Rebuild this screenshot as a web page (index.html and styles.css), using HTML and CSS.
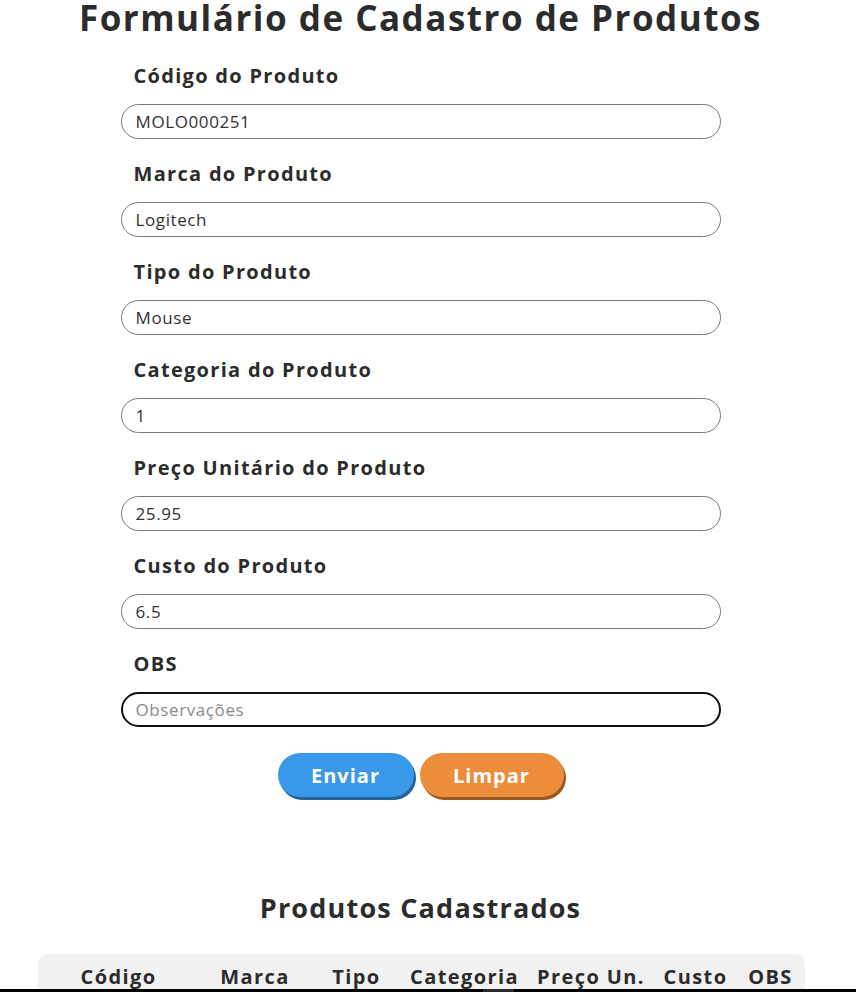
FILE: index.html
```html
<!DOCTYPE html>
<html lang="pt-BR">
<head>
<meta charset="utf-8">
<title>Cadastro de Produtos</title>
<link rel="stylesheet" href="styles.css">
</head>
<body>
<div class="page">
  <h1 class="title">Formulário de Cadastro de Produtos</h1>
  <form class="form">
    <div class="group">
      <label class="label" for="codigo">Código do Produto</label>
      <input class="field" id="codigo" type="text" value="MOLO000251">
    </div>
    <div class="group">
      <label class="label" for="marca">Marca do Produto</label>
      <input class="field" id="marca" type="text" value="Logitech">
    </div>
    <div class="group">
      <label class="label" for="tipo">Tipo do Produto</label>
      <input class="field" id="tipo" type="text" value="Mouse">
    </div>
    <div class="group">
      <label class="label" for="categoria">Categoria do Produto</label>
      <input class="field" id="categoria" type="text" value="1">
    </div>
    <div class="group">
      <label class="label" for="preco">Preço Unitário do Produto</label>
      <input class="field" id="preco" type="text" value="25.95">
    </div>
    <div class="group">
      <label class="label" for="custo">Custo do Produto</label>
      <input class="field" id="custo" type="text" value="6.5">
    </div>
    <div class="group">
      <label class="label" for="obs">OBS</label>
      <input class="field field-focus" id="obs" type="text" placeholder="Observações">
    </div>
    <div class="actions">
      <button type="button" class="btn btn-send">Enviar</button>
      <button type="button" class="btn btn-clear">Limpar</button>
    </div>
  </form>
  <h2 class="subtitle">Produtos Cadastrados</h2>
  <div class="table-wrap">
    <table class="table">
      <thead>
        <tr>
          <th class="c-cod">Código</th>
          <th class="c-marca">Marca</th>
          <th class="c-tipo">Tipo</th>
          <th class="c-cat">Categoria</th>
          <th class="c-preco">Preço Un.</th>
          <th class="c-custo">Custo</th>
          <th class="c-obs">OBS</th>
        </tr>
      </thead>
    </table>
  </div>
</div>
<div class="bottom-bar"><span class="bottom-thumb"></span></div>
</body>
</html>
```
FILE: styles.css
```css
html, body {
  margin: 0;
  padding: 0;
  background: #ffffff;
}
body {
  font-family: "Open Sans", "DejaVu Sans", sans-serif;
  color: #2f2f2f;
  overflow: hidden;
  height: 992px;
  position: relative;
}
.page {
  width: 841px;
}
.title {
  margin: 0;
  text-align: center;
  font-size: 35px;
  line-height: 36px;
  font-weight: 700;
  letter-spacing: 1.5px;
  color: #2c2c2c;
}
.form {
  width: 600px;
  margin: 28px auto 0;
  display: flex;
  flex-direction: column;
}
.group {
  display: flex;
  flex-direction: column;
  margin-bottom: 23px;
}
.label {
  font-size: 20px;
  line-height: 24px;
  font-weight: 700;
  letter-spacing: 1.3px;
  padding-left: 13px;
  margin-bottom: 16px;
  color: #2c2c2c;
}
.field {
  box-sizing: border-box;
  width: 600px;
  height: 35px;
  border: 1px solid #7a7a7a;
  border-radius: 18px;
  padding: 0 13px 0 14px;
  font-family: inherit;
  font-size: 17px;
  letter-spacing: 0.6px;
  color: #333;
  background: #fff;
  outline: none;
}
.field::placeholder {
  color: #8a8a8a;
}
.field-focus {
  border: 2px solid #111;
  padding-left: 13px;
}
.actions {
  display: flex;
  justify-content: center;
  gap: 6px;
  margin-top: 3px;
}
.btn {
  height: 44px;
  border: none;
  border-radius: 22px;
  font-family: inherit;
  font-size: 20px;
  font-weight: 700;
  letter-spacing: 1px;
  color: #fff;
  padding: 0;
}
.btn-send {
  width: 136px;
  background: #3a98e9;
  box-shadow: 2px 3px 0 #23639b;
}
.btn-clear {
  width: 144px;
  background: #ec8d3b;
  box-shadow: 2px 3px 0 #9a5a24;
}
.subtitle {
  margin: 94px 0 0;
  text-align: center;
  font-size: 27px;
  line-height: 34px;
  font-weight: 700;
  letter-spacing: 1.2px;
  color: #2c2c2c;
}
.table-wrap {
  margin: 29px 0 0 38px;
  width: 767px;
  background: #f1f1f1;
  border-radius: 10px 10px 0 0;
  padding-top: 10px;
}
.table {
  border-collapse: collapse;
  table-layout: fixed;
  width: 100%;
}
.table th {
  font-size: 20px;
  font-weight: 700;
  line-height: 26px;
  letter-spacing: 1.4px;
  color: #2c2c2c;
  padding: 0;
  text-align: center;
  white-space: nowrap;
}
.c-cod { width: 161px; }
.c-marca { width: 112px; }
.c-tipo { width: 91px; }
.c-cat { width: 125px; }
.c-preco { width: 128px; }
.c-custo { width: 81px; }
.c-obs { width: 69px; }
.bottom-bar {
  position: absolute;
  left: 0;
  right: 0;
  bottom: 0;
  height: 3px;
  background: #000;
}
.bottom-thumb {
  position: absolute;
  left: 483px;
  width: 31px;
  top: 0;
  height: 3px;
  background: #2a2a2a;
}
```
